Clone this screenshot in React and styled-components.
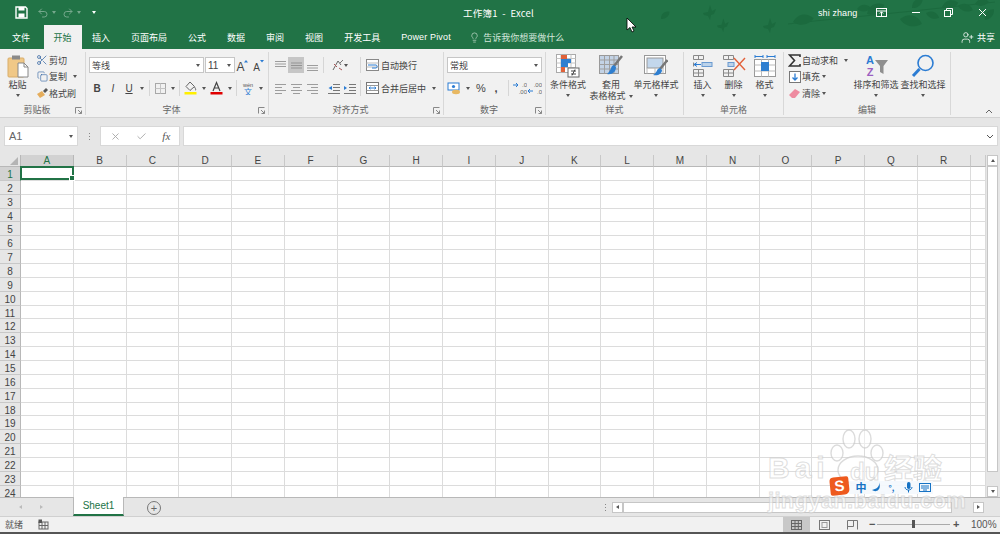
import React from "react";
import styled, { createGlobalStyle } from "styled-components";
import { Undo2, Redo2, Lightbulb, UserPlus, X, Check, Scissors, Copy } from "lucide-react";

const GlobalStyle = createGlobalStyle`
  html, body { margin: 0; padding: 0; background: #e6e6e6; }
  body { font-family: "Noto Sans CJK SC", "Liberation Sans", sans-serif; font-size: 9px; color: #444; }
`;

const CJK = `"Noto Sans CJK SC", "Liberation Sans", sans-serif`;
const LATIN = `"Liberation Sans", sans-serif`;
const columns = "ABCDEFGHIJKLMNOPQR".split("");
const rows = Array.from({ length: 24 }, (_, i) => i + 1);

const Page = styled.div`
  position: relative;
  width: 1000px;
  height: 534px;
  overflow: hidden;
  display: flex;
  flex-direction: column;
`;

/* green header */
const Head = styled.header`
  position: relative;
  background: #217346;
  color: #fff;
  height: 49px;
  flex: none;
`;
const Leaves = styled.svg`
  position: absolute;
  left: 650px;
  top: 0;
`;
const TitleBar = styled.div`
  position: relative;
  height: 25px;
  display: flex;
  align-items: center;
`;
const Quick = styled.div`
  display: flex;
  flex: none;
  align-items: center;
  width: 300px;
  padding-left: 15px;
  box-sizing: border-box;
  color: #fff;
`;
const QuickSlot = styled.span`
  display: inline-flex;
  align-items: center;
  margin-right: ${p => p.$mr || 0}px;
  opacity: ${p => (p.$dim ? 0.38 : 1)};
`;
const TitleText = styled.div`
  width: 397px;
  flex: none;
  text-align: center;
  font-size: 9.5px;
  letter-spacing: 0.2px;
`;
const WindowControls = styled.div`
  display: flex;
  flex: none;
  align-items: center;
  font-family: ${LATIN};
  font-size: 9px;
`;
const UserName = styled.span`
  margin-left: 121px;
  width: 47px;
  letter-spacing: 0.1px;
`;
const WinBtn = styled.span`
  display: inline-flex;
  justify-content: center;
  width: 33.5px;
`;
const TabRow = styled.nav`
  position: relative;
  height: 24px;
  display: flex;
  align-items: stretch;
  padding-left: 1.5px;
`;
const Tab = styled.div`
  display: flex;
  align-items: center;
  padding: 0 ${p => (p.$active ? 10 : 10.5)}px;
  margin-right: ${p => p.$mr || 0}px;
  font-family: ${p => (p.$latin ? LATIN : CJK)};
  font-size: 9px;
  letter-spacing: ${p => (p.$latin ? 0.15 : 0)}px;
  background: ${p => (p.$active ? "#f1f1f1" : "transparent")};
  color: ${p => (p.$active ? "#217346" : "#fff")};
`;
const TellMe = styled.div`
  display: flex;
  align-items: center;
  gap: 3px;
  margin-left: 8px;
  font-size: 9px;
  color: #d3e6da;
`;
const Share = styled.div`
  display: flex;
  align-items: center;
  gap: 3px;
  margin-left: auto;
  margin-right: 5px;
  font-size: 9px;
`;

/* ribbon */
const Ribbon = styled.section`
  height: 69px;
  flex: none;
  box-sizing: border-box;
  background: #f1f1f1;
  border-bottom: 1px solid #d2d2d2;
  display: flex;
  padding-top: 3px;
  position: relative;
`;
const Group = styled.div`
  width: ${p => p.$w}px;
  height: 63px;
  box-sizing: border-box;
  border-right: 1px solid #d8d8d8;
  display: flex;
  flex-direction: column;
  position: relative;
`;
const GroupBody = styled.div`
  height: 52px;
  display: flex;
  padding-left: ${p => p.$pl || 0}px;
  box-sizing: border-box;
`;
const GroupLabel = styled.div`
  height: 11px;
  line-height: 11px;
  text-align: center;
  font-size: 9px;
  color: #666;
  padding-right: ${p => (p.$launcher ? 11 : 0)}px;
`;
const Launcher = styled.svg`
  position: absolute;
  right: 3px;
  bottom: 1px;
`;
const Stack = styled.div`
  padding-top: 5px;
  display: flex;
  flex-direction: column;
  gap: 7px;
`;
const ToolRow = styled.div`
  height: 16px;
  display: flex;
  align-items: center;
`;
const Slot = styled.span`
  width: ${p => p.$w ?? 16}px;
  height: 16px;
  flex: none;
  display: inline-flex;
  align-items: center;
  justify-content: center;
  margin-left: ${p => p.$ml || 0}px;
  font-family: ${LATIN};
  font-size: ${p => p.$fs || 10}px;
  font-weight: ${p => (p.$bold ? 700 : 400)};
  font-style: ${p => (p.$italic ? "italic" : "normal")};
  text-decoration: ${p => (p.$under ? "underline" : "none")};
  color: #444;
  background: ${p => (p.$on ? "#c6c6c6" : "transparent")};
`;
const Divider = styled.span`
  width: 1px;
  height: 16px;
  flex: none;
  margin: 0 ${p => p.$m || 3}px;
  background: #d6d6d6;
`;
const Select = styled.div`
  width: ${p => p.$w}px;
  height: 16px;
  box-sizing: border-box;
  flex: none;
  background: #fff;
  border: 1px solid #c6c6c6;
  margin-right: ${p => p.$mr ?? 1}px;
  display: flex;
  align-items: center;
  justify-content: space-between;
  padding: 0 3px 0 2px;
  font-family: ${p => (p.$latin ? LATIN : CJK)};
  font-size: ${p => (p.$latin ? 10 : 9)}px;
  color: #444;
`;
const Caret = styled.i`
  display: inline-block;
  flex: none;
  width: 0;
  height: 0;
  vertical-align: middle;
  border-left: 2.5px solid transparent;
  border-right: 2.5px solid transparent;
  border-top: 3px solid ${p => p.$c || "#555"};
  margin-left: ${p => p.$ml || 0}px;
`;
const BigButton = styled.div`
  width: ${p => p.$w}px;
  flex: none;
  padding-top: 2px;
  display: flex;
  flex-direction: column;
  align-items: center;
  font-size: 9px;
  line-height: 11px;
  color: #444;
  white-space: nowrap;
`;
const BigIcon = styled.div`
  height: 24px;
  margin-bottom: 1px;
  display: flex;
  align-items: center;
  justify-content: center;
`;
const CaretLine = styled.div`
  height: 11px;
  display: flex;
  align-items: center;
  justify-content: center;
`;
const SmallColumn = styled.div`
  width: ${p => p.$w}px;
  flex: none;
  box-sizing: border-box;
  display: flex;
  flex-direction: column;
`;
const SmallButton = styled.div`
  height: 16.5px;
  display: flex;
  align-items: center;
  font-size: 9px;
  white-space: nowrap;
  color: #444;
`;
const SmallIcon = styled.span`
  width: ${p => p.$w || 14}px;
  flex: none;
  display: inline-flex;
  align-items: center;
  justify-content: center;
`;
const Collapse = styled.svg`
  position: absolute;
  left: 985px;
  top: 60px;
`;

/* formula bar */
const FormulaBar = styled.div`
  height: 37px;
  flex: none;
  box-sizing: border-box;
  padding: 8px 2px 9px 4px;
  display: flex;
  align-items: stretch;
  background: #e6e6e6;
`;
const NameBox = styled.div`
  width: 74px;
  box-sizing: border-box;
  background: #fff;
  border: 1px solid #d8d8d8;
  padding: 0 4px;
  display: flex;
  align-items: center;
  justify-content: space-between;
  font-family: ${LATIN};
  font-size: 11px;
  color: #666;
`;
const Grip = styled.span`
  width: ${p => p.$w || 22}px;
  display: flex;
  flex-direction: column;
  align-items: center;
  justify-content: center;
  gap: 2px;
  & > i { width: 1px; height: 1px; background: #888; }
`;
const FxBox = styled.div`
  width: 80px;
  box-sizing: border-box;
  background: #fff;
  border: 1px solid #d8d8d8;
  display: flex;
  align-items: center;
  justify-content: space-around;
  padding: 0 1px;
  color: #a8a8a8;
`;
const Fx = styled.span`
  font-family: "Liberation Serif", serif;
  font-style: italic;
  font-size: 11px;
  color: #555;
`;
const FormulaInput = styled.div`
  flex: 1;
  margin-left: 3px;
  box-sizing: border-box;
  background: #fff;
  border: 1px solid #d8d8d8;
  display: flex;
  align-items: center;
  justify-content: flex-end;
  padding-right: 3px;
`;

/* sheet */
const SheetArea = styled.div`
  height: 342px;
  flex: none;
  display: flex;
  background: #e6e6e6;
`;
const Grid = styled.div`
  position: relative;
  width: 986px;
  flex: none;
  overflow: hidden;
  display: grid;
  grid-template-columns: 21px repeat(18, 52.75px) 1fr;
  grid-template-rows: 12px;
  grid-auto-rows: 13.87px;
  background: #fff;
`;
const Corner = styled.div`
  background: #e6e6e6;
  border-bottom: 1px solid #b8b8b8;
  border-right: 1px solid #b8b8b8;
  position: relative;
  &::after {
    content: "";
    position: absolute;
    right: 2px;
    bottom: 1px;
    border-left: 8px solid transparent;
    border-bottom: 8px solid #b4b4b4;
  }
`;
const ColHead = styled.div`
  background: ${p => (p.$active ? "#d2d2d2" : "#e6e6e6")};
  color: ${p => (p.$active ? "#217346" : "#444")};
  border-right: 1px solid ${p => (p.$active ? "#b8b8b8" : "#c8c8c8")};
  border-bottom: 1px solid ${p => (p.$active ? "#217346" : "#b8b8b8")};
  box-sizing: border-box;
  font-family: ${LATIN};
  font-size: 10px;
  line-height: 12px;
  text-align: center;
`;
const RowHead = styled.div`
  background: ${p => (p.$active ? "#d2d2d2" : "#e6e6e6")};
  color: ${p => (p.$active ? "#217346" : "#444")};
  border-right: 1px solid ${p => (p.$active ? "#217346" : "#b8b8b8")};
  border-bottom: 1px solid #c8c8c8;
  box-sizing: border-box;
  font-family: ${LATIN};
  font-size: 10px;
  line-height: 15px;
  text-align: center;
`;
const Cell = styled.div`
  border-right: 1px solid #dcdcdc;
  border-bottom: 1px solid #dcdcdc;
  box-sizing: border-box;
  position: relative;
`;
const Selection = styled.div`
  position: absolute;
  inset: -1px -1px 0 -1px;
  border: 2px solid #217346;
  z-index: 1;
  &::after {
    content: "";
    position: absolute;
    right: -3px;
    bottom: -3px;
    width: 4px;
    height: 4px;
    background: #217346;
    border: 1px solid #fff;
    box-sizing: content-box;
  }
`;
const VScroll = styled.div`
  flex: 1;
  display: flex;
  flex-direction: column;
  align-items: center;
  padding: 0 2px 0 1px;
  background: #e6e6e6;
`;
const ScrollBtn = styled.div`
  width: 11px;
  height: 11px;
  flex: none;
  box-sizing: border-box;
  background: #fff;
  border: 1px solid #c6c6c6;
  display: flex;
  align-items: center;
  justify-content: center;
`;
const VThumb = styled.div`
  width: 11px;
  height: 306px;
  flex: none;
  background: #fff;
  border: 1px solid #c6c6c6;
  box-sizing: border-box;
  margin-bottom: auto;
`;
const UpCaret = styled(Caret)`
  border-top: 0;
  border-bottom: 3px solid #555;
`;
const SideCaret = styled.i`
  width: 0;
  height: 0;
  border-top: 2.5px solid transparent;
  border-bottom: 2.5px solid transparent;
  border-${p => (p.$left ? "right" : "left")}: 3px solid ${p => p.$c || "#555"};
`;

/* sheet tabs */
const SheetBar = styled.div`
  height: 19px;
  flex: none;
  box-sizing: border-box;
  background: #e6e6e6;
  border-top: 1px solid #b8b8b8;
  display: flex;
  align-items: stretch;
  position: relative;
`;
const SheetNav = styled.div`
  width: 73px;
  flex: none;
  padding-left: 19px;
  box-sizing: border-box;
  display: flex;
  align-items: center;
  gap: 18px;
`;
const SheetTab = styled.div`
  width: 51px;
  margin-top: -1px;
  box-sizing: border-box;
  background: #fff;
  border-left: 1px solid #b8b8b8;
  border-right: 1px solid #b8b8b8;
  border-bottom: 2px solid #217346;
  color: #217346;
  font-family: ${LATIN};
  font-size: 10px;
  display: flex;
  align-items: center;
  justify-content: center;
`;
const AddSheet = styled.div`
  width: 12px;
  height: 12px;
  margin: 3px 0 0 23px;
  border-radius: 50%;
  border: 1px solid #777;
  color: #666;
  display: flex;
  align-items: center;
  justify-content: center;
  font-size: 11px;
  line-height: 1;
  font-family: ${LATIN};
`;
const HScroll = styled.div`
  width: 372px;
  margin-left: 5px;
  margin-right: 16px;
  display: flex;
  align-items: center;
`;
const SheetGrip = styled(Grip)`
  margin-left: auto;
`;
const HThumb = styled.div`
  width: 329px;
  height: 11px;
  background: #fff;
  border: 1px solid #c6c6c6;
  box-sizing: border-box;
  margin-right: auto;
`;

/* status bar */
const StatusBar = styled.footer`
  height: 16px;
  flex: none;
  box-sizing: border-box;
  background: #f1f1f1;
  border-top: 1px solid #d0d0d0;
  display: flex;
  align-items: center;
  padding-left: 5px;
  font-size: 9px;
  color: #555;
`;
const ViewBtn = styled.span`
  width: ${p => p.$w}px;
  height: 15px;
  flex: none;
  display: inline-flex;
  align-items: center;
  justify-content: center;
  margin-left: ${p => (p.$first ? "auto" : 0)};
  background: ${p => (p.$on ? "#c8c8c8" : "transparent")};
`;
const Zoom = styled.div`
  width: 134px;
  flex: none;
  box-sizing: border-box;
  padding-left: 3px;
  display: flex;
  align-items: center;
  font-family: ${LATIN};
  font-size: 10px;
  color: #555;
`;
const ZoomSign = styled.span`
  width: 6px;
  font-size: 11px;
  font-weight: 700;
  line-height: 1;
  text-align: center;
`;
const Track = styled.div`
  position: relative;
  width: 73px;
  height: 1px;
  margin: 0 3px 0 2px;
  background: #aaa;
`;
const Knob = styled.i`
  position: absolute;
  left: 35px;
  top: -4px;
  width: 3px;
  height: 8px;
  background: #555;
`;
const ZoomValue = styled.span`
  margin-left: 12px;
`;
const BottomEdge = styled.div`
  height: 2px;
  flex: none;
  background: #555;
`;

/* overlays */
const Cursor = styled.svg`
  position: absolute;
  left: 626px;
  top: 17px;
`;
const Watermark = styled.div`
  position: absolute;
  left: 764px;
  top: 426px;
  width: 190px;
  height: 90px;
  pointer-events: none;
`;
const WaterText = styled.span`
  position: absolute;
  left: ${p => p.$x}px;
  top: ${p => p.$y}px;
  font-family: ${p => (p.$cjk ? CJK : LATIN)};
  font-size: ${p => p.$size}px;
  font-weight: 700;
  line-height: 1;
  letter-spacing: ${p => p.$ls || 0}px;
  white-space: nowrap;
  color: rgba(255, 255, 255, 0.55);
  -webkit-text-stroke: 1px rgba(200, 200, 200, 0.6);
`;
const Paw = styled.svg`
  position: absolute;
  left: 62px;
  top: 0;
`;
const ImeBar = styled.div`
  position: absolute;
  left: 830px;
  top: 477px;
  display: flex;
  align-items: center;
`;
const ImeLogo = styled.div`
  width: 19px;
  height: 18px;
  border-radius: 4px 2px 5px 2px;
  background: #ee5a1e;
  color: #fff;
  font: 700 15px/18px ${LATIN};
  text-align: center;
  transform: rotate(-6deg);
`;
const ImeTray = styled.div`
  height: 13px;
  width: 84px;
  margin-top: 2px;
  padding-left: 4px;
  box-sizing: border-box;
  background: rgba(244, 248, 253, 0.92);
  display: flex;
  align-items: center;
  color: #1773c4;
  font-size: 11px;
  font-weight: 700;
`;
const ImeItem = styled.span`
  width: ${p => p.$w}px;
  flex: none;
  display: inline-flex;
  justify-content: center;
  font-size: ${p => p.$fs || 11}px;
  line-height: 13px;
`;

/* icons */
const Svg = ({ w = 16, h = 16, children }) => (
  <svg width={w} height={h} viewBox={`0 0 ${w} ${h}`} fill="none">{children}</svg>
);

const Lines = ({ ys, xs, stroke = "#888" }) => (
  <Svg w={13} h={13}>
    {ys.map((y, i) => (
      <path key={i} d={`M${xs[i][0]} ${y}H${xs[i][1]}`} stroke={stroke} strokeWidth="0.8" />
    ))}
  </Svg>
);
const VAlign = ({ start }) => (
  <Lines ys={[start, start + 2.5, start + 5]} xs={[[1, 12], [1, 12], [1, 12]]} />
);
const HAlign = ({ kind }) => {
  const x = { l: [[1, 12], [1, 8], [1, 12], [1, 8]], c: [[1, 12], [3, 10], [1, 12], [3, 10]], r: [[1, 12], [5, 12], [1, 12], [5, 12]] }[kind];
  return <Lines ys={[2.5, 5.5, 8.5, 11.5]} xs={x} />;
};
const Indent = ({ flip }) => (
  <Svg w={14} h={13}>
    <path d="M6 2.5H13M6 5.5H13M6 8.5H13M1 11.5H13" stroke="#777" />
    <path d={flip ? "M1 4L4 6L1 8Z" : "M5 4L1.5 6L5 8Z"} fill="#2b7cd3" />
  </Svg>
);
const SaveIcon = () => (
  <Svg w={13} h={13}>
    <path d="M1 1H10.5L12 2.5V12H1Z" stroke="#fff" strokeWidth="1.4" />
    <rect x="3.5" y="1" width="6" height="3.5" fill="#fff" />
    <rect x="3.5" y="7.5" width="6" height="4" fill="#fff" />
  </Svg>
);
const PasteIcon = () => (
  <svg width="22" height="24" viewBox="0 0 22 24" fill="none">
    <rect x="1" y="4" width="16" height="19" rx="1" fill="#f0c887" stroke="#d8ad6b" />
    <rect x="5" y="1.5" width="8" height="4" fill="#8a8a8a" />
    <path d="M11 9H17L21 13V23H11Z" fill="#fff" stroke="#888" />
    <path d="M17 9V13H21" stroke="#888" />
  </svg>
);
const FormatBrush = () => (
  <Svg w={13} h={12}>
    <path d="M1 7L6 4L9 8L4 11Z" fill="#e5ad5c" />
    <path d="M7 4L10 1L12 3L9 6Z" fill="#555" />
  </Svg>
);
const BorderIcon = () => (
  <Svg w={13} h={13}>
    <rect x="1.5" y="1.5" width="10" height="10" stroke="#a8a8a8" />
    <path d="M6.5 1.5V11.5M1.5 6.5H11.5" stroke="#c4c4c4" />
  </Svg>
);
const FillIcon = () => (
  <Svg w={13} h={14}>
    <path d="M6 1L10.5 5.5L6 9.5L2 5.5Z" stroke="#666" />
    <path d="M10.5 6C12 8 12 9 11 9.5" stroke="#666" />
    <rect x="0.5" y="11" width="12" height="2.5" fill="#ffef00" />
  </Svg>
);
const FontColor = () => (
  <Svg w={13} h={14}>
    <path d="M3 10L6.5 1.5L10 10M4.3 7H8.7" stroke="#444" strokeWidth="1.2" />
    <rect x="0.5" y="11" width="12" height="2.5" fill="#e00000" />
  </Svg>
);
const Wen = () => (
  <Svg w={14} h={14}>
    <text x="7" y="5.5" textAnchor="middle" fontSize="5.5" fill="#555" fontFamily="Liberation Sans">wén</text>
    <text x="7" y="13.5" textAnchor="middle" fontSize="8" fill="#2b7cd3" fontFamily="Noto Sans CJK SC">文</text>
  </Svg>
);
const FontGrow = ({ up }) => (
  <Svg w={14} h={13}>
    <text x="5.5" y="12" textAnchor="middle" fontSize={up ? 12 : 10} fill="#444" fontFamily="Liberation Sans">A</text>
    <path d={up ? "M9 3.5L11 1L13 3.5Z" : "M9 1L11 3.5L13 1Z"} fill="#2b7cd3" />
  </Svg>
);
const Orient = () => (
  <Svg w={13} h={13}>
    <path d="M2 11L7 2L10 6" stroke="#666" />
    <path d="M9 4L12 1" stroke="#777" />
    <path d="M3 5L6 8M8 9L11 11" stroke="#a55" />
  </Svg>
);
const WrapIcon = () => (
  <Svg w={15} h={14}>
    <rect x="1.5" y="1.5" width="12" height="11" fill="#fff" stroke="#888" />
    <path d="M1.5 5H13.5M1.5 9H13.5" stroke="#bbb" />
    <path d="M3 7H11C12.5 7 12.5 10 11 10H7" stroke="#2b7cd3" />
  </Svg>
);
const MergeIcon = () => (
  <Svg w={15} h={14}>
    <rect x="1.5" y="1.5" width="12" height="11" fill="#fff" stroke="#777" />
    <path d="M1.5 4.5H13.5M1.5 9.5H13.5" stroke="#999" />
    <path d="M4 7H11M4 7L5.5 5.8M4 7L5.5 8.2M11 7L9.5 5.8M11 7L9.5 8.2" stroke="#2b7cd3" />
  </Svg>
);
const Accounting = () => (
  <Svg w={15} h={14}>
    <rect x="1" y="2" width="11" height="7" fill="#fff" stroke="#2b7cd3" />
    <circle cx="6.5" cy="5.5" r="1.6" fill="#2b7cd3" />
    <ellipse cx="9" cy="11" rx="4" ry="2.2" fill="#e8b862" />
  </Svg>
);
const DecimalUp = ({ less }) => (
  <Svg w={15} h={14}>
    <text x="15" y="6" textAnchor="end" fontSize="6" fill="#666" fontFamily="Liberation Sans">{less ? ".00" : ".0"}</text>
    <text x="15" y="13" textAnchor="end" fontSize="6" fill="#666" fontFamily="Liberation Sans">{less ? ".0" : ".00"}</text>
    <path d={less ? "M1 10H6M3 8L1 10L3 12" : "M6 4H1M4 2L6 4L4 6"} stroke="#2b7cd3" />
  </Svg>
);
const CondFormat = () => (
  <svg width="24" height="24" viewBox="0 0 24 24" fill="none">
    <rect x="0.5" y="0.5" width="19" height="18" fill="#fff" stroke="#aaa" />
    <path d="M0.5 4.5H19.5M0.5 9H19.5M0.5 13.5H19.5M5 0.5V18.5M15 0.5V18.5" stroke="#c4c4c4" />
    <rect x="5" y="1" width="6" height="4" fill="#e0623a" />
    <rect x="5" y="5" width="10" height="4" fill="#2f7fd0" />
    <rect x="5" y="9" width="7" height="4" fill="#2f7fd0" />
    <rect x="5" y="13" width="4" height="5" fill="#e0623a" />
    <rect x="12" y="14" width="11" height="9" fill="#fff" stroke="#666" />
    <path d="M15 17H20M15 20H20M19 15.5L16 21.5" stroke="#444" />
  </svg>
);
const TableFormat = () => (
  <svg width="24" height="24" viewBox="0 0 24 24" fill="none">
    <rect x="0.5" y="1.5" width="19" height="18" fill="#c3d3e6" stroke="#999" />
    <path d="M0.5 6H19.5M0.5 10.5H19.5M0.5 15H19.5M5.5 1.5V19.5M10.5 1.5V19.5M15 1.5V19.5" stroke="#9f9f9f" />
    <path d="M23 2L15 12" stroke="#777" strokeWidth="2.5" />
    <path d="M15 11C11 12 13 16 8 20C13 21 17 18 17 13Z" fill="#2f7fd0" />
  </svg>
);
const CellStyle = () => (
  <svg width="24" height="24" viewBox="0 0 24 24" fill="none">
    <rect x="0.5" y="1.5" width="21" height="18" fill="#fff" stroke="#999" />
    <rect x="3" y="4" width="16" height="10" fill="#c3d7ec" stroke="#999" />
    <path d="M3 14V19.5M11 14V19.5M19 14V19.5" stroke="#bbb" />
    <path d="M23.5 6L16 15" stroke="#777" strokeWidth="2.5" />
    <path d="M16 14C12 15 14 18 9 21C14 22 18 20 18 16Z" fill="#2f7fd0" />
  </svg>
);
const InsertCell = () => (
  <svg width="22" height="24" viewBox="0 0 22 24" fill="none">
    <path d="M1.5 1.5H11.5V5.5H1.5ZM6.5 1.5V5.5M1.5 15.5H11.5V22.5H1.5ZM1.5 19H11.5M6.5 15.5V22.5" stroke="#888" />
    <rect x="10" y="8.5" width="10" height="4" fill="#bcd3ea" stroke="#6a9ad0" />
    <path d="M9 10.5H2M2 10.5L5 8.5M2 10.5L5 12.5" stroke="#2b7cd3" />
    <path d="M1.5 8.5V12.5" stroke="#888" />
  </svg>
);
const DeleteCell = () => (
  <svg width="24" height="24" viewBox="0 0 24 24" fill="none">
    <path d="M1.5 1.5H11.5V5.5H1.5ZM6.5 1.5V5.5M1.5 15.5H11.5V22.5H1.5ZM1.5 19H11.5M6.5 15.5V22.5" stroke="#888" />
    <rect x="6" y="8.5" width="6" height="4" fill="#bcd3ea" stroke="#6a9ad0" />
    <path d="M12 4L23 16M23 4L12 16" stroke="#e2613a" strokeWidth="1.4" />
  </svg>
);
const FormatCell = () => (
  <svg width="22" height="24" viewBox="0 0 22 24" fill="none">
    <path d="M1 2.5H9M13 2.5H21M1 1V4M21 1V4M9 1V4M13 1V4" stroke="#2b7cd3" />
    <rect x="0.5" y="5.5" width="21" height="17" fill="#fff" stroke="#999" />
    <path d="M7.5 5.5V22.5M14.5 5.5V22.5M0.5 11H21.5M0.5 17H21.5" stroke="#bbb" />
    <rect x="7" y="8" width="8" height="9" fill="#2f7fd0" />
  </svg>
);
const SortFilter = () => (
  <svg width="26" height="24" viewBox="0 0 26 24" fill="none">
    <text x="7" y="10" textAnchor="middle" fontSize="11" fontWeight="700" fill="#2b7cd3" fontFamily="Liberation Sans">A</text>
    <text x="7" y="22" textAnchor="middle" fontSize="11" fontWeight="700" fill="#9b5fc0" fontFamily="Liberation Sans">Z</text>
    <path d="M12 6H25L20.5 12V20L17 18V12Z" fill="#8f8f8f" />
  </svg>
);
const FindIcon = () => (
  <svg width="24" height="24" viewBox="0 0 24 24" fill="none">
    <circle cx="14.5" cy="9" r="7.5" stroke="#2b7cd3" strokeWidth="1.6" />
    <path d="M8.5 15L2 22" stroke="#2b7cd3" strokeWidth="3" />
  </svg>
);
const SumIcon = () => (
  <Svg w={13} h={13}>
    <path d="M12 3V1H1.5L6.5 6.5L1.5 12H12V10" stroke="#333" strokeWidth="1.6" />
  </Svg>
);
const FillDown = () => (
  <Svg w={12} h={13}>
    <rect x="0.5" y="1.5" width="11" height="11" fill="#fff" stroke="#777" />
    <path d="M6 3.5V10M3.5 7.5L6 10L8.5 7.5" stroke="#2b7cd3" strokeWidth="1.3" />
  </Svg>
);
const Eraser = () => (
  <Svg w={13} h={12}>
    <path d="M1 8L7 2L12 5L7 11H4Z" fill="#ee8ba0" />
  </Svg>
);
const MacroIcon = () => (
  <Svg w={11} h={11}>
    <rect x="1" y="3" width="9" height="7" stroke="#666" />
    <path d="M4 3V10M7 3V10M1 6.5H10" stroke="#666" />
    <rect x="0.5" y="0.5" width="3.5" height="3.5" fill="#555" />
  </Svg>
);

const Leaf = ({ x, y, r = 0, s = 1 }) => (
  <path
    d="M0 0C4 -5 10 -5 14 0C10 4 4 4 0 0Z"
    transform={`translate(${x} ${y}) rotate(${r}) scale(${s})`}
    fill="#1b6a3e"
  />
);
const Bird = ({ x, y, s = 1 }) => (
  <path
    d="M0 4L5 3L7 -4L9 2L13 0L11 5L8 6L7 11L5 7L1 6Z"
    transform={`translate(${x} ${y}) scale(${s})`}
    fill="#1b6a3e"
  />
);

const dialog = (
  <Launcher width="7" height="7" viewBox="0 0 7 7" fill="none">
    <path d="M0.5 6.5V0.5H6.5M3 3L6.5 6.5M6.5 3.5V6.5H3.5" stroke="#888" />
  </Launcher>
);

const Small = ({ icon, text, caret, iw, gap }) => (
  <SmallButton>
    <SmallIcon $w={iw}>{icon}</SmallIcon>
    {text}
    {caret && <Caret $ml={gap ?? 5} />}
  </SmallButton>
);

const Big = ({ w, icon, lines, inline }) => (
  <BigButton $w={w}>
    <BigIcon>{icon}</BigIcon>
    {lines.map((l, i) => (
      <div key={l}>
        {l}
        {inline && i === lines.length - 1 && <Caret $ml={3} />}
      </div>
    ))}
    {!inline && (
      <CaretLine>
        <Caret />
      </CaretLine>
    )}
  </BigButton>
);

export default function App() {
  return (
    <Page>
      <GlobalStyle />
      <Head>
        <Leaves width="350" height="40" viewBox="0 0 350 40">
          <Leaf x={11} y={19} r={-40} s={0.8} />
          <Bird x={53} y={9} />
          <Bird x={67} y={22} s={0.9} />
          <Bird x={113} y={22} />
          <path d="M138 24C170 20 240 14 345 2" stroke="#1b6a3e" fill="none" />
          <Leaf x={143} y={22} r={-10} s={1.5} />
          <Leaf x={207} y={9} r={-5} />
          <Leaf x={217} y={14} r={-28} s={1.4} />
          <Leaf x={250} y={19} r={12} s={1.6} />
          <Leaf x={262} y={8} r={-40} />
          <Leaf x={276} y={13} r={20} />
          <Leaf x={292} y={7} r={-15} s={1.2} />
          <Leaf x={308} y={6} r={15} s={1.1} />
          <Leaf x={325} y={4} r={-10} />
          <Leaf x={335} y={20} r={-50} />
        </Leaves>
        <TitleBar>
          <Quick>
            <QuickSlot $mr={9}><SaveIcon /></QuickSlot>
            <QuickSlot $dim $mr={3}><Undo2 size={12} /></QuickSlot>
            <QuickSlot $dim $mr={6}><Caret $c="#fff" /></QuickSlot>
            <QuickSlot $dim $mr={3}><Redo2 size={12} /></QuickSlot>
            <QuickSlot $dim $mr={11}><Caret $c="#fff" /></QuickSlot>
            <QuickSlot><Caret $c="#fff" /></QuickSlot>
          </Quick>
          <TitleText>工作簿1 &nbsp;-&nbsp; Excel</TitleText>
          <WindowControls>
            <UserName>shi zhang</UserName>
            <WinBtn>
              <Svg w={11} h={9}>
                <rect x="0.5" y="0.5" width="10" height="8" stroke="#fff" />
                <path d="M0.5 3H10.5" stroke="#fff" />
                <path d="M5.5 8V4M3.8 5.5L5.5 3.8L7.2 5.5" stroke="#fff" />
              </Svg>
            </WinBtn>
            <WinBtn>
              <Svg w={9} h={9}><path d="M1 4.5H9" stroke="#fff" /></Svg>
            </WinBtn>
            <WinBtn>
              <Svg w={9} h={9}>
                <rect x="0.5" y="2.5" width="6" height="6" stroke="#fff" />
                <path d="M2.5 2.5V0.5H8.5V6.5H6.5" stroke="#fff" />
              </Svg>
            </WinBtn>
            <WinBtn>
              <Svg w={9} h={9}><path d="M1 1L8 8M8 1L1 8" stroke="#fff" /></Svg>
            </WinBtn>
          </WindowControls>
        </TitleBar>
        <TabRow>
          <Tab $mr={3}>文件</Tab>
          <Tab $active>开始</Tab>
          <Tab>插入</Tab>
          <Tab>页面布局</Tab>
          <Tab>公式</Tab>
          <Tab>数据</Tab>
          <Tab>审阅</Tab>
          <Tab>视图</Tab>
          <Tab>开发工具</Tab>
          <Tab $latin>Power Pivot</Tab>
          <TellMe>
            <Lightbulb size={11} strokeWidth={1.4} />
            告诉我你想要做什么
          </TellMe>
          <Share>
            <UserPlus size={13} strokeWidth={1.4} />
            共享
          </Share>
        </TabRow>
      </Head>

      <Ribbon>
        <Group $w={86}>
          <GroupBody>
            <Big w={35} icon={<PasteIcon />} lines={["粘贴"]} />
            <SmallColumn $w={50}>
              <Small icon={<Scissors size={12} color="#2b5e9e" strokeWidth={1.4} />} text="剪切" />
              <Small icon={<Copy size={11} color="#2b5e9e" strokeWidth={1.3} />} text="复制" caret gap={6} />
              <Small icon={<FormatBrush />} text="格式刷" />
            </SmallColumn>
          </GroupBody>
          <GroupLabel $launcher>剪贴板</GroupLabel>
          {dialog}
        </Group>

        <Group $w={183}>
          <GroupBody $pl={3}>
            <Stack>
              <ToolRow>
                <Select $w={115}>等线<Caret /></Select>
                <Select $w={30} $mr={0} $latin>11<Caret /></Select>
                <Slot $w={14}><FontGrow up /></Slot>
                <Slot $w={14} $ml={2}><FontGrow /></Slot>
              </ToolRow>
              <ToolRow>
                <Slot $bold>B</Slot>
                <Slot $italic>I</Slot>
                <Slot $under>U</Slot>
                <Slot $w={10}><Caret /></Slot>
                <Divider $m={2} />
                <Slot><BorderIcon /></Slot>
                <Slot $w={9}><Caret /></Slot>
                <Divider $m={2} />
                <Slot $w={17}><FillIcon /></Slot>
                <Slot $w={9}><Caret /></Slot>
                <Slot $w={17}><FontColor /></Slot>
                <Slot $w={9}><Caret /></Slot>
                <Divider $m={2} />
                <Slot $w={18}><Wen /></Slot>
                <Slot $w={7}><Caret /></Slot>
              </ToolRow>
            </Stack>
          </GroupBody>
          <GroupLabel $launcher>字体</GroupLabel>
          {dialog}
        </Group>

        <Group $w={175}>
          <GroupBody $pl={3}>
            <Stack>
              <ToolRow>
                <Slot><VAlign start={2.5} /></Slot>
                <Slot $on><VAlign start={4} /></Slot>
                <Slot><VAlign start={6.5} /></Slot>
                <Slot $w={2} />
                <Divider $m={1} />
                <Slot $w={13} $ml={5.5}><Orient /></Slot>
                <Slot $w={5}><Caret /></Slot>
                <Slot $w={9.5} />
                <Divider $m={2} />
                <Small icon={<WrapIcon />} text="自动换行" iw={18} />
              </ToolRow>
              <ToolRow>
                <Slot><HAlign kind="l" /></Slot>
                <Slot><HAlign kind="c" /></Slot>
                <Slot><HAlign kind="r" /></Slot>
                <Slot $w={6} />
                <Slot><Indent /></Slot>
                <Slot><Indent flip /></Slot>
                <Divider $m={2} />
                <Small icon={<MergeIcon />} text="合并后居中" iw={18} caret gap={6} />
              </ToolRow>
            </Stack>
          </GroupBody>
          <GroupLabel $launcher>对齐方式</GroupLabel>
          {dialog}
        </Group>

        <Group $w={102}>
          <GroupBody $pl={3}>
            <Stack>
              <ToolRow>
                <Select $w={95} $mr={0}>常规<Caret /></Select>
              </ToolRow>
              <ToolRow>
                <Slot $w={15}><Accounting /></Slot>
                <Slot $w={11}><Caret /></Slot>
                <Slot $w={16} $fs={11}>%</Slot>
                <Slot $w={14} $bold $fs={11}>,</Slot>
                <Slot $w={3} />
                <Divider $m={2} />
                <Slot $w={16}><DecimalUp /></Slot>
                <Slot $w={15}><DecimalUp less /></Slot>
              </ToolRow>
            </Stack>
          </GroupBody>
          <GroupLabel $launcher>数字</GroupLabel>
          {dialog}
        </Group>

        <Group $w={138}>
          <GroupBody>
            <Big w={44} icon={<CondFormat />} lines={["条件格式"]} />
            <Big w={42} icon={<TableFormat />} lines={["套用", "表格格式"]} inline />
            <Big w={48} icon={<CellStyle />} lines={["单元格样式"]} />
          </GroupBody>
          <GroupLabel>样式</GroupLabel>
        </Group>

        <Group $w={100}>
          <GroupBody $pl={3}>
            <Big w={31} icon={<InsertCell />} lines={["插入"]} />
            <Big w={31} icon={<DeleteCell />} lines={["删除"]} />
            <Big w={31} icon={<FormatCell />} lines={["格式"]} />
          </GroupBody>
          <GroupLabel>单元格</GroupLabel>
        </Group>

        <Group $w={167}>
          <GroupBody $pl={3}>
            <SmallColumn $w={66}>
              <Small icon={<SumIcon />} text="自动求和" iw={15} caret gap={6} />
              <Small icon={<FillDown />} text="填充" iw={15} caret gap={2} />
              <Small icon={<Eraser />} text="清除" iw={15} caret gap={2} />
            </SmallColumn>
            <Big w={46} icon={<SortFilter />} lines={["排序和筛选"]} />
            <Big w={48} icon={<FindIcon />} lines={["查找和选择"]} />
          </GroupBody>
          <GroupLabel>编辑</GroupLabel>
        </Group>
        <Collapse width="8" height="5" viewBox="0 0 8 5" fill="none">
          <path d="M1 4L4 1L7 4" stroke="#666" />
        </Collapse>
      </Ribbon>

      <FormulaBar>
        <NameBox>A1<Caret /></NameBox>
        <Grip><i /><i /><i /></Grip>
        <FxBox>
          <X size={11} />
          <Check size={11} />
          <Fx>fx</Fx>
        </FxBox>
        <FormulaInput>
          <svg width="8" height="5" viewBox="0 0 8 5" fill="none"><path d="M1 1L4 4L7 1" stroke="#555" /></svg>
        </FormulaInput>
      </FormulaBar>

      <SheetArea>
        <Grid>
          <Corner />
          {columns.map(c => (
            <ColHead key={c} $active={c === "A"}>{c}</ColHead>
          ))}
          <ColHead />
          {rows.map(r => (
            <React.Fragment key={r}>
              <RowHead $active={r === 1}>{r}</RowHead>
              {columns.map(c => (
                <Cell key={c}>{r === 1 && c === "A" && <Selection />}</Cell>
              ))}
              <Cell />
            </React.Fragment>
          ))}
        </Grid>
        <VScroll>
          <ScrollBtn><UpCaret /></ScrollBtn>
          <VThumb />
          <ScrollBtn><Caret /></ScrollBtn>
        </VScroll>
      </SheetArea>

      <SheetBar>
        <SheetNav>
          <SideCaret $left $c="#bbb" />
          <SideCaret $c="#bbb" />
        </SheetNav>
        <SheetTab>Sheet1</SheetTab>
        <AddSheet>+</AddSheet>
        <SheetGrip $w={4}><i /><i /><i /></SheetGrip>
        <HScroll>
          <ScrollBtn><SideCaret $left /></ScrollBtn>
          <HThumb />
          <ScrollBtn><SideCaret /></ScrollBtn>
        </HScroll>
      </SheetBar>

      <StatusBar>
        就绪
        <Slot $ml={12}><MacroIcon /></Slot>
        <ViewBtn $on $first $w={27}>
          <Svg w={11} h={10}>
            <rect x="0.5" y="0.5" width="10" height="9" stroke="#666" />
            <path d="M4 .5V9.5M7.3 .5V9.5M.5 3.5H10.5M.5 6.5H10.5" stroke="#666" />
          </Svg>
        </ViewBtn>
        <ViewBtn $w={28}>
          <Svg w={11} h={10}>
            <rect x="0.5" y="0.5" width="10" height="9" stroke="#777" />
            <rect x="3" y="2.5" width="5" height="5" stroke="#999" />
          </Svg>
        </ViewBtn>
        <ViewBtn $w={28}>
          <Svg w={11} h={10}>
            <path d="M.5 9.5V.5H10.5V9.5M.5 6.5H6.5V.5" stroke="#777" />
          </Svg>
        </ViewBtn>
        <Zoom>
          <ZoomSign>−</ZoomSign>
          <Track><Knob /></Track>
          <ZoomSign>+</ZoomSign>
          <ZoomValue>100%</ZoomValue>
        </Zoom>
      </StatusBar>
      <BottomEdge />

      <Watermark>
        <Paw width="66" height="62" viewBox="0 0 66 62" fill="rgba(255,255,255,.45)" stroke="rgba(200,200,200,.65)" strokeWidth="1.4">
          <ellipse cx="11" cy="27" rx="6" ry="8" />
          <ellipse cx="23" cy="13" rx="6" ry="9" />
          <ellipse cx="39" cy="13" rx="6" ry="9" />
          <ellipse cx="51" cy="27" rx="6" ry="8" />
          <ellipse cx="32" cy="44" rx="20" ry="14" />
        </Paw>
        <WaterText $x={4} $y={27} $size={30} $ls={5}>Bai</WaterText>
        <WaterText $x={86} $y={34} $size={24}>du</WaterText>
        <WaterText $x={120} $y={27} $size={29} $cjk>经验</WaterText>
        <WaterText $x={4} $y={64} $size={22} $ls={0.3}>jingyan.baidu.com</WaterText>
      </Watermark>

      <ImeBar>
        <ImeLogo>S</ImeLogo>
        <ImeTray>
          <ImeItem $w={16}>中</ImeItem>
          <ImeItem $w={15}>
            <svg width="10" height="10" viewBox="0 0 10 10"><path d="M7 0C8 4 5 7 0 8C4 11 10 8 7 0Z" fill="#1773c4" /></svg>
          </ImeItem>
          <ImeItem $w={15} $fs={8}>°,</ImeItem>
          <ImeItem $w={18}>
            <svg width="9" height="11" viewBox="0 0 9 11" fill="none"><rect x="3" y="0" width="3.5" height="7" rx="1.7" fill="#1773c4" /><path d="M1 5C1 9 8 9 8 5M4.5 8V10.5" stroke="#1773c4" /></svg>
          </ImeItem>
          <ImeItem $w={16}>
            <svg width="12" height="9" viewBox="0 0 12 9" fill="none"><rect x="0.5" y="0.5" width="11" height="8" stroke="#1773c4" /><path d="M2 3H10M2 5H10M4 7H8" stroke="#1773c4" /></svg>
          </ImeItem>
        </ImeTray>
      </ImeBar>

      <Cursor width="11" height="17" viewBox="0 0 11 17">
        <path d="M1 1V13L4 10.5L6 15L8 14L6 10H10Z" fill="#fff" stroke="#000" strokeWidth="0.8" />
      </Cursor>
    </Page>
  );
}
